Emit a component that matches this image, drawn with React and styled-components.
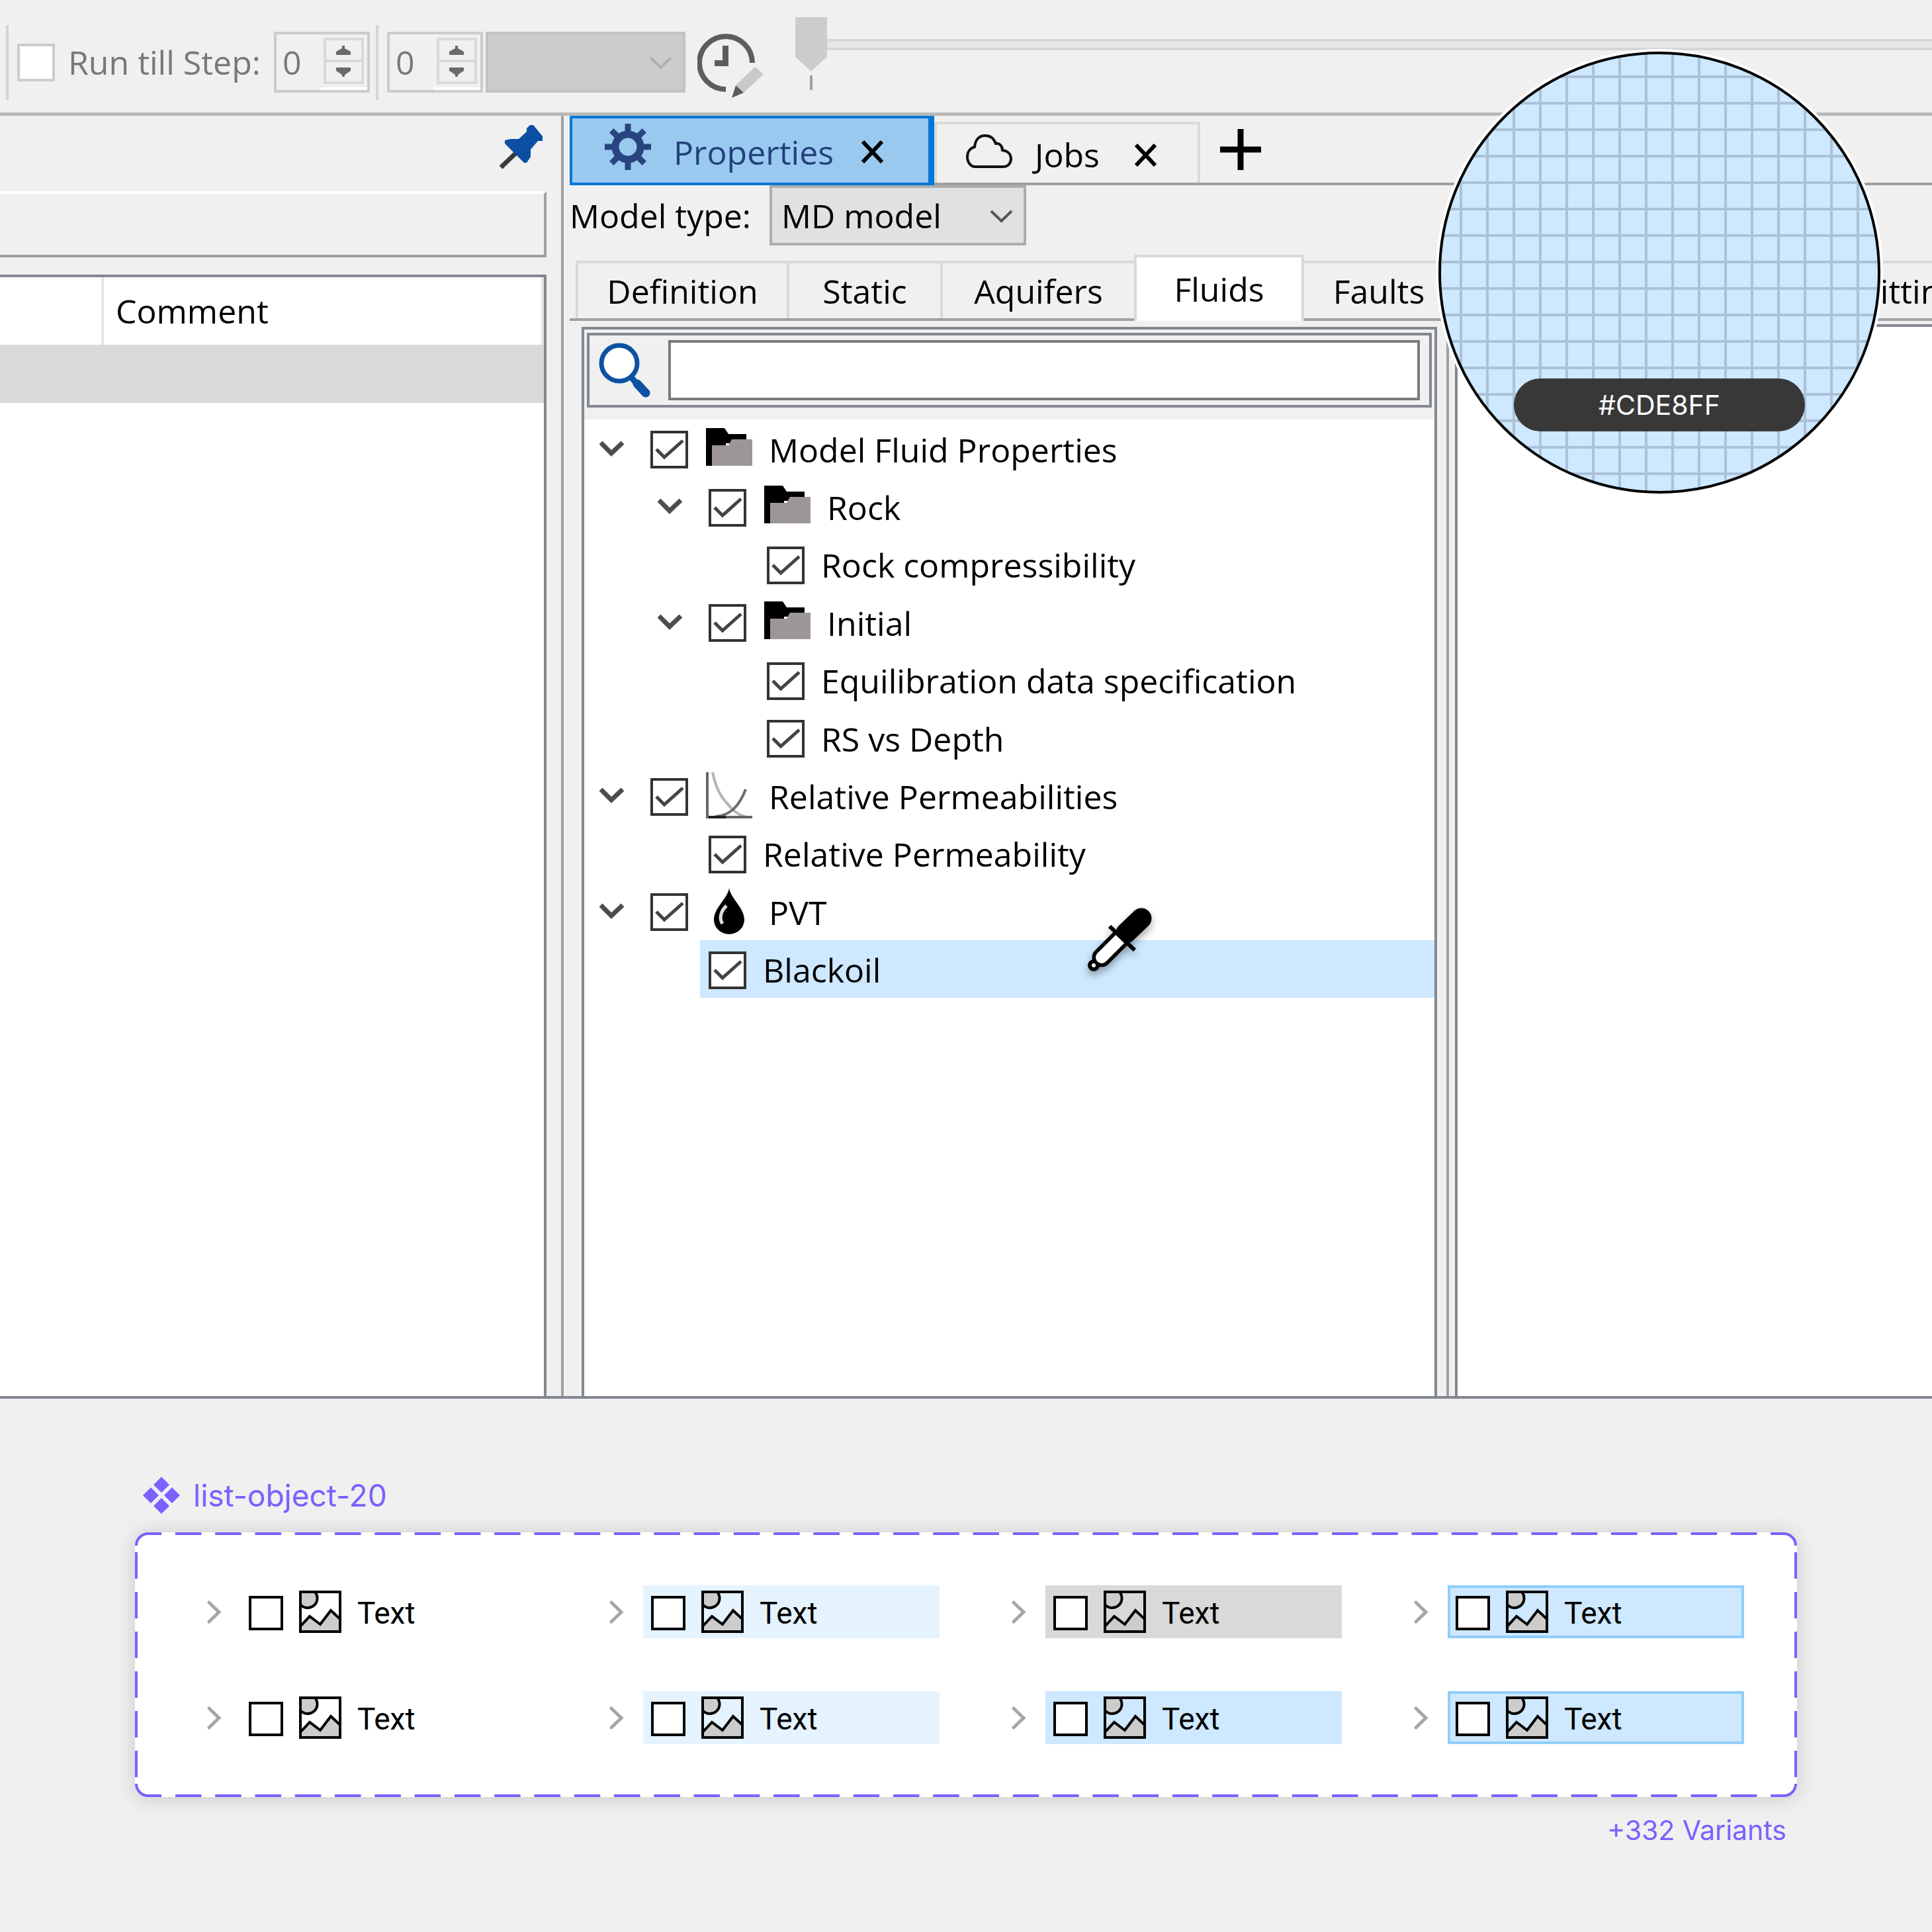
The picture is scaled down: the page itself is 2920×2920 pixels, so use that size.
import React, { useState } from "react";
import styled, { createGlobalStyle, css } from "styled-components";

const GlobalStyle = createGlobalStyle`
  *, *::before, *::after {
    box-sizing: border-box;
  }

  body {
    margin: 0;
    background: #f0f0f0;
    color: #000;
    font-family: "Open Sans", "Noto Sans", sans-serif;
    font-size: 50px;
    line-height: 68px;
  }

  button, input, select {
    margin: 0;
    padding: 0;
    border: none;
    border-radius: 0;
    background: none;
    color: inherit;
    font: inherit;
  }

  svg {
    display: block;
    flex: none;
  }
`;

const Page = styled.div`
  position: relative;
  display: flex;
  flex-direction: column;
  min-height: 100vh;
  overflow: hidden;
`;

/* ---------- toolbar ---------- */

const Toolbar = styled.header`
  display: flex;
  align-items: center;
  height: 175px;
  padding: 18px 0 0 9px;
  border-bottom: 5px solid #b8b8b8;
  color: #787878;
`;

const Separator = styled.span`
  flex: none;
  width: 4px;
  height: 113px;
  margin-right: 13px;
  background: #d4d4d4;
`;

const StepLabel = styled.label`
  display: flex;
  align-items: center;
  gap: 20px;
  margin-right: 20px;
  white-space: nowrap;
`;

const Spin = styled.div`
  display: flex;
  flex: none;
  width: 145px;
  height: 92px;
  margin-right: ${(props) => (props.$last ? "4px" : "9px")};
  border: 4px solid #ccc;
`;

const SpinInput = styled.input`
  flex: 1;
  min-width: 0;
  padding-left: 9px;
  appearance: textfield;

  &::-webkit-inner-spin-button {
    display: none;
  }
`;

const Steps = styled.div`
  display: flex;
  flex-direction: column;
  width: 71px;
  padding: 5px;
  border-bottom: 4px solid #fff;
`;

const StepButton = styled.button`
  display: flex;
  flex: 1;
  align-items: center;
  justify-content: center;
  border: 4px solid #d9d9d9;

  & + & {
    border-top: none;
  }
`;

const SelectWrap = styled.div`
  position: relative;
  flex: none;
  width: ${(props) => props.$width}px;
  height: ${(props) => props.$height}px;
  color: ${(props) => (props.$disabled ? "#b0b0b0" : "#555")};

  svg {
    position: absolute;
    right: 20px;
    top: 36px;
    pointer-events: none;
  }
`;

const SelectBox = styled.select`
  width: 100%;
  height: 100%;
  padding-left: 14px;
  border: 4px solid #adadad;
  background: #e1e1e1;
  color: #000;
  appearance: none;
  opacity: 1;

  &:disabled {
    border-color: #c2c2c2;
    background: #ccc;
  }
`;

const IconButton = styled.button`
  display: flex;
  flex: none;
  cursor: pointer;
`;

const TimeButton = styled(IconButton)`
  margin: 10px 48px 0 18px;
`;

const SliderArea = styled.div`
  flex: 1;
  min-width: 0;
  align-self: flex-start;
  padding-top: 8px;
`;

const Slider = styled.input`
  display: block;
  width: 100%;
  height: 82px;
  appearance: none;

  &::-webkit-slider-runnable-track {
    height: 17px;
    border: 4px solid #d6d6d6;
    border-right: none;
    background: #e7e9e8;
  }

  &::-webkit-slider-thumb {
    width: 48px;
    height: 82px;
    margin: -37px 0 0 -4px;
    background: #ccc;
    clip-path: polygon(0 0, 100% 0, 100% 74%, 50% 100%, 0 74%);
    appearance: none;
  }
`;

const SliderTick = styled.div`
  width: 4px;
  height: 22px;
  margin: 6px 0 0 22px;
  background: #a0a0a0;
`;

/* ---------- check boxes ---------- */

const CheckWrap = styled.span`
  display: grid;
  flex: none;

  & > * {
    grid-area: 1 / 1;
  }

  svg {
    pointer-events: none;
  }
`;

const CheckInput = styled.input`
  width: ${(props) => props.$size}px;
  height: ${(props) => props.$size}px;
  border: 4px solid ${(props) => props.$color};
  background: #fff;
  appearance: none;
`;

/* ---------- workspace ---------- */

const Workspace = styled.main`
  display: grid;
  flex: 1;
  grid-template-columns: 852px minmax(0, 1fr);
  border-bottom: 4px solid #828790;
`;

const Sidebar = styled.aside`
  display: flex;
  flex-direction: column;
  padding-right: 22px;
  border-right: 4px solid #a0a0a0;
`;

const SidebarHead = styled.div`
  display: flex;
  justify-content: flex-end;
  height: 114px;
  padding: 14px 5px 0 0;
`;

const SidebarBox = styled.div`
  height: 100px;
  margin-bottom: 26px;
  border: 4px solid #a0a0a0;
  border-top-color: #fff;
  border-left: none;
`;

const TableFrame = styled.div`
  flex: 1;
  border-top: 4px solid #828790;
  border-right: 4px solid #828790;
  background: #fff;
`;

const Table = styled.table`
  width: 100%;
  border-collapse: separate;
  border-spacing: 0;

  th {
    height: 102px;
    padding: 0 0 0 18px;
    border-right: 4px solid #e5e5e5;
    font-weight: 400;
    text-align: left;
  }

  th:first-child {
    width: 157px;
  }

  td {
    height: 88px;
    padding: 0;
    background: #d9d9d9;
  }
`;

const Content = styled.section`
  display: flex;
  flex-direction: column;
  min-width: 0;
  padding-left: 9px;
`;

const PageTabs = styled.nav`
  display: flex;
  align-items: flex-end;
  height: 105px;
  border-bottom: 4px solid #a0a0a0;
`;

const PageTab = styled.div`
  display: flex;
  align-items: center;
  width: ${(props) => props.$width}px;
  height: 92px;
  padding: 4px 0 0 44px;
  border: 4px solid #d9d9d9;
  border-bottom: none;

  ${(props) =>
    props.$active &&
    css`
      height: 105px;
      margin-bottom: -4px;
      padding-left: 48px;
      border: 4px solid #0078d7;
      border-right-width: 9px;
      background: #99c9ef;
      color: #24407c;
    `}
`;

const TabName = styled.button`
  display: flex;
  flex: 1;
  align-items: center;
  gap: 34px;
  cursor: pointer;
`;

const CloseButton = styled(IconButton)`
  margin-right: ${(props) => (props.$wide ? "66px" : "60px")};
  color: #000;
`;

const AddButton = styled(IconButton)`
  align-self: center;
  margin-left: 30px;
`;

const ModelRow = styled.div`
  display: flex;
  align-items: center;
  gap: 28px;
  height: 91px;
  margin-bottom: 14px;
`;

const Columns = styled.div`
  display: grid;
  flex: 1;
  grid-template-columns: 1329px minmax(0, 1fr);
`;

const Column = styled.div`
  display: flex;
  flex-direction: column;
  min-width: 0;
`;

const SubTabs = styled.div`
  display: flex;
  align-items: flex-end;
  height: 100px;
  padding-left: ${(props) => (props.$flush ? "0" : "9px")};
  border-bottom: 4px solid #a0a0a0;
`;

const SubTab = styled.button`
  flex: 0 0 ${(props) => (props.$width ? `${props.$width}px` : "auto")};
  height: 87px;
  border-top: 4px solid #d9d9d9;
  border-left: 4px solid #d9d9d9;
  white-space: nowrap;

  ${(props) =>
    props.$active &&
    css`
      height: 100px;
      margin-bottom: -4px;
      border-right: 4px solid #d9d9d9;
      background: #fff;
    `}

  ${(props) =>
    props.$after &&
    css`
      border-left: none;
    `}
`;

// Last tab of the strip, it runs on past the edge of the window.
const FittingTab = styled(SubTab)`
  padding: 0 48px 0 626px;
  border-left: none;
`;

const TreePane = styled.div`
  display: flex;
  flex: 1;
  flex-direction: column;
  padding: 9px 14px 0 18px;
  border-right: 4px solid #a0a0a0;
`;

const TreeFrame = styled.div`
  flex: 1;
  border: 4px solid #828790;
  border-bottom: none;
  background: #fff;
`;

const SearchBar = styled.div`
  padding: 5px 4px 18px;
  background: #f0f0f0;
`;

const SearchFrame = styled.label`
  display: flex;
  align-items: center;
  gap: 27px;
  height: 113px;
  padding: 0 14px;
  border: 4px solid #828790;
`;

const SearchInput = styled.input`
  flex: 1;
  min-width: 0;
  height: 91px;
  padding: 0 14px;
  border: 4px solid #7a7a7a;
  background: #fff;
`;

const Tree = styled.ul`
  display: grid;
  grid-auto-rows: 1fr;
  height: 874px;
  margin: 0;
  padding: 0;
  list-style: none;
`;

const TreeRow = styled.li`
  display: flex;
  padding-left: ${(props) => 22 + props.$level * 88}px;
`;

const ToggleSlot = styled.span`
  display: flex;
  flex: none;
  align-items: center;
  width: 65px;
`;

const TreeLabel = styled.label`
  display: flex;
  flex: 1;
  align-items: center;
  gap: 25px;
  padding: 4px 0 0 13px;
  background: ${(props) => (props.$selected ? "#cde8ff" : "transparent")};
  white-space: nowrap;
`;

const TreeIcon = styled.svg`
  margin-left: 2px;
`;

const ViewerPane = styled.div`
  flex: 1;
  margin: 5px 0 0 9px;
  border-top: 4px solid #828790;
  border-left: 4px solid #828790;
  background: #fff;
`;

/* ---------- colour loupe ---------- */

const Loupe = styled.div`
  position: absolute;
  top: 78px;
  right: 78px;
  display: flex;
  align-items: flex-end;
  justify-content: center;
  width: 668px;
  height: 668px;
  padding-bottom: 90px;
  border: 4px solid #000;
  border-radius: 50%;
  background-color: #cde8ff;
  background-image: linear-gradient(90deg, #abc2d6 4px, transparent 4px),
    linear-gradient(#abc2d6 4px, transparent 4px);
  background-position: 28px 32px;
  background-size: 40px 40px;
  box-shadow: 0 0 0 4px #fff;
`;

const HexPill = styled.output`
  width: 440px;
  border-radius: 40px;
  background: #383838;
  color: #fff;
  font: 41px/80px Inter, sans-serif;
  text-align: center;
`;

const Eyedropper = styled.svg`
  position: absolute;
  top: 1368px;
  left: 1640px;
  overflow: visible;
  filter: drop-shadow(0 6px 6px rgba(0, 0, 0, 0.35));
`;

/* ---------- component set ---------- */

const Library = styled.footer`
  padding: 118px 204px 130px;
  color: #7b61ff;
  font-family: Inter, sans-serif;
`;

const SetTitle = styled.h2`
  display: flex;
  align-items: center;
  gap: 20px;
  height: 56px;
  margin: 0 0 28px;
  padding-left: 12px;
  font-size: 46px;
  font-weight: 400;
`;

// The border is solid; the two pseudo elements paint the gaps over it so the
// corners stay closed whatever the frame's size is.
const SetFrame = styled.div`
  position: relative;
  display: grid;
  grid-template-columns: repeat(4, minmax(0, 1fr));
  gap: 80px;
  padding: 76px;
  border: 4px solid #7b61ff;
  border-radius: 20px;
  background: #fff;
  box-shadow: 0 2px 32px rgba(0, 0, 0, 0.17);

  &::before,
  &::after {
    content: "";
    position: absolute;
    pointer-events: none;
  }

  &::before {
    inset: -4px 16px;
    background-image: linear-gradient(90deg, transparent 33%, #fff 33% 67%, transparent 67%),
      linear-gradient(90deg, transparent 33%, #fff 33% 67%, transparent 67%);
    background-position: top, bottom;
    background-repeat: round no-repeat;
    background-size: 60px 4px;
  }

  &::after {
    inset: 16px -4px;
    background-image: linear-gradient(transparent 33%, #fff 33% 67%, transparent 67%),
      linear-gradient(transparent 33%, #fff 33% 67%, transparent 67%);
    background-position: left, right;
    background-repeat: no-repeat round;
    background-size: 4px 60px;
  }
`;

const Variant = styled.div`
  display: flex;
  height: 80px;
`;

const VariantToggle = styled(IconButton)`
  align-items: center;
  justify-content: center;
  width: 80px;
`;

const fills = {
  none: "transparent",
  hover: "#e5f3ff",
  muted: "#d9d9d9",
  selected: "#cde8ff",
  focused: "#cde8ff",
};

const VariantBody = styled.label`
  display: flex;
  flex: 1;
  align-items: center;
  gap: 24px;
  padding: 4px 0 0 12px;
  background: ${(props) => fills[props.$state]};
  box-shadow: ${(props) => (props.$state === "focused" ? "inset 0 0 0 4px #91cefa" : "none")};
  color: #000;
  font: 46px/64px Roboto, sans-serif;
`;

const SetCount = styled.p`
  margin: 26px 16px 0 0;
  font-size: 41px;
  line-height: 48px;
  text-align: right;
`;

/* ---------- drawings ---------- */

const Chevron = () => (
  <svg width="35" height="22" viewBox="0 0 35 22" fill="none" stroke="currentColor" strokeWidth="4">
    <path d="M2 3 17.5 18 33 3" />
  </svg>
);

const StepArrow = ({ down }) => (
  <svg width="22" height="14" viewBox="0 0 22 14" fill="#6a6a6a">
    <path d={down ? "M0 0H22V5L13 11V14H9V11L0 5Z" : "M0 14H22V9L13 4V0H9V4L0 9Z"} />
  </svg>
);

const TimeIcon = () => (
  <svg width="100" height="97" viewBox="0 0 100 97">
    <path d="M43 84A40 40 0 1 1 83 44" fill="none" stroke="#5c5e5d" strokeWidth="8" />
    <path d="M38 18H47V49H26V40H38Z" fill="#5c5e5d" />
    <path d="M87 50 100 61 70 89 58 78Z" fill="#c8c9cb" />
    <path d="M58 78 70 89 52 97Z" fill="#5c5e5d" />
  </svg>
);

const PinIcon = () => (
  <svg width="67" height="66" viewBox="0 0 67 66">
    <path d="M25 43 3 64" stroke="#3a3a3a" strokeWidth="7" />
    <path
      d="M47 0H52L66 17V24H59L48 37V48L42 57H38L9 28V23L18 21H30L42 10V5Z"
      fill="#0a4fa3"
    />
  </svg>
);

const GearIcon = () => (
  <svg width="71" height="87" viewBox="-36 -36 71 87" stroke="#28457f" fill="none">
    <circle r="19" strokeWidth="11" />
    {[0, 45, 90, 135, 180, 225, 270, 315].map((angle) => (
      <path key={angle} d="M0 -21V-35" strokeWidth="9" transform={`rotate(${angle})`} />
    ))}
  </svg>
);

const CloudIcon = () => (
  <svg width="70" height="64" viewBox="0 0 70 64" fill="none" stroke="#111" strokeWidth="4">
    <path d="M14 50H56C64 50 68 44 68 38C68 30 62 26 55 25C55 18 50 14 45 15C42 7 37 3 29 3C19 3 14 10 13 20C6 22 2 28 2 35C2 43 7 50 14 50Z" />
  </svg>
);

const CloseIcon = () => (
  <svg width="37" height="37" viewBox="0 0 37 37" stroke="currentColor" strokeWidth="6">
    <path d="M4 3 33 34M33 3 4 34" />
  </svg>
);

const PlusIcon = () => (
  <svg width="62" height="62" viewBox="0 0 62 62" stroke="#000" strokeWidth="9">
    <path d="M31 0V62M0 31H62" />
  </svg>
);

const SearchIcon = () => (
  <svg width="78" height="84" viewBox="0 0 78 84" stroke="#0b52a3">
    <path d="M48 51 60 65" strokeWidth="9" />
    <path d="M58 62 71 76" strokeWidth="13" strokeLinecap="round" />
    <circle cx="31" cy="31" r="27" fill="#fff" strokeWidth="7" />
  </svg>
);

const ToggleIcon = () => (
  <svg width="39" height="26" viewBox="0 0 39 26" fill="none" stroke="#4d4d4d" strokeWidth="7">
    <path d="M3 4 19 20 36 4" />
  </svg>
);

const FolderIcon = () => (
  <TreeIcon width="70" height="74" viewBox="0 -3 70 74">
    <path d="M0 1H28L34 10H61V24H30V40H9V58H0Z" />
    <path d="M9 27H34L39 18H70V58H9Z" fill="#9d9696" />
  </TreeIcon>
);

const CurvesIcon = () => (
  <TreeIcon width="70" height="74" viewBox="0 0 70 74" fill="none" strokeWidth="4">
    <path d="M10 0C14 20 20 34 30 45C40 57 46 64 62 68" stroke="#b4b4b4" />
    <path d="M14 67C36 66 50 52 60 26" stroke="#6c6c6c" />
    <path d="M2 0V68H70" stroke="#666" />
    <path d="M4 68H30" stroke="#222" />
  </TreeIcon>
);

const DropIcon = () => (
  <TreeIcon width="70" height="74" viewBox="0 0 70 74">
    <path d="M35 0C37 16 58 30 58 48A23 22 0 0 1 12 48C12 30 33 16 35 0Z" />
    <path d="M31 27C23 34 19 46 25 54" fill="none" stroke="#ddd" strokeWidth="5" />
  </TreeIcon>
);

const ComponentIcon = () => (
  <svg width="56" height="56" viewBox="0 0 56 56" fill="currentColor">
    <path d="M28 0 40 12 28 24 16 12ZM44 16 56 28 44 40 32 28ZM28 32 40 44 28 56 16 44ZM12 16 24 28 12 40 0 28Z" />
  </svg>
);

const ChevronRight = () => (
  <svg width="22" height="35" viewBox="0 0 22 35" fill="none" stroke="#a6a6a6" strokeWidth="5">
    <path d="M3 3 18 17.5 3 32" strokeLinecap="round" />
  </svg>
);

const PictureIcon = () => (
  <svg width="64" height="68" viewBox="0 0 64 68" fill="#ccc" stroke="#000" strokeWidth="4">
    <path d="M24 2A14 14 0 0 1 2 21V2Z" />
    <path d="M2 54 16 39 32 51 48 30 62 43V62H2Z" />
    <path d="M2 2H62V62H2Z" fill="none" />
  </svg>
);

const EyedropperIcon = () => (
  <Eyedropper width="104" height="104" viewBox="0 0 104 104" aria-hidden="true">
    <g strokeLinecap="round">
      <path d="M25 79 52 52" stroke="#000" strokeWidth="29" />
      <path d="M62 42 85 20" stroke="#000" strokeWidth="31" />
      <circle cx="13" cy="91" r="9" />
    </g>
    <path d="M25 79V79" stroke="#fff" strokeWidth="18" strokeLinecap="round" />
    <path d="M25 79 53 51" stroke="#fff" strokeWidth="18" />
    <circle cx="13" cy="91" r="3" fill="#fff" />
    <path d="M37 32 75 68" stroke="#000" strokeWidth="6" />
  </Eyedropper>
);

/* ---------- data ---------- */

const icons = { folder: FolderIcon, curves: CurvesIcon, drop: DropIcon };

const treeItems = [
  { name: "Model Fluid Properties", level: 0, icon: "folder" },
  { name: "Rock", level: 1, icon: "folder" },
  { name: "Rock compressibility", level: 2 },
  { name: "Initial", level: 1, icon: "folder" },
  { name: "Equilibration data specification", level: 2 },
  { name: "RS vs Depth", level: 2 },
  { name: "Relative Permeabilities", level: 0, icon: "curves" },
  { name: "Relative Permeability", level: 1 },
  { name: "PVT", level: 0, icon: "drop" },
  { name: "Blackoil", level: 1, selected: true },
];

const subTabs = [
  { name: "Definition", width: 319 },
  { name: "Static", width: 232 },
  { name: "Aquifers", width: 293 },
  { name: "Fluids", width: 257 },
  { name: "Faults", width: 226, after: true },
];

const variants = ["none", "hover", "muted", "focused", "none", "hover", "selected", "focused"];

const CheckBox = ({ size = 57, color = "#333", checked, onChange, disabled }) => (
  <CheckWrap>
    <CheckInput
      type="checkbox"
      $size={size}
      $color={color}
      checked={checked}
      onChange={onChange}
      disabled={disabled}
    />
    {checked && (
      <svg width={size} height={size} viewBox="0 0 57 57" fill="none" stroke="#444" strokeWidth="5">
        <path d="M9 28 21 40 49 15" />
      </svg>
    )}
  </CheckWrap>
);

const Spinner = ({ label, last }) => (
  <Spin $last={last}>
    <SpinInput type="number" aria-label={label} value={0} readOnly disabled />
    <Steps>
      <StepButton aria-label="Increase" disabled>
        <StepArrow />
      </StepButton>
      <StepButton aria-label="Decrease" disabled>
        <StepArrow down />
      </StepButton>
    </Steps>
  </Spin>
);

const TreeItem = ({ item }) => {
  const [checked, setChecked] = useState(true);
  const Icon = icons[item.icon];

  return (
    <TreeRow $level={item.level}>
      <ToggleSlot>
        {Icon && (
          <IconButton aria-label={`Collapse ${item.name}`}>
            <ToggleIcon />
          </IconButton>
        )}
      </ToggleSlot>
      <TreeLabel $selected={item.selected}>
        <CheckBox checked={checked} onChange={() => setChecked(!checked)} />
        {Icon && <Icon />}
        {item.name}
      </TreeLabel>
    </TreeRow>
  );
};

const VariantItem = ({ state }) => {
  const [checked, setChecked] = useState(false);

  return (
    <Variant>
      <VariantToggle aria-label="Expand">
        <ChevronRight />
      </VariantToggle>
      <VariantBody $state={state}>
        <CheckBox size={52} color="#000" checked={checked} onChange={() => setChecked(!checked)} />
        <PictureIcon />
        Text
      </VariantBody>
    </Variant>
  );
};

const App = () => {
  const [activeTab, setActiveTab] = useState("Fluids");
  const [query, setQuery] = useState("");

  return (
    <>
      <GlobalStyle />
      <Page>
        <Toolbar>
          <Separator />
          <StepLabel>
            <CheckBox color="#ccc" checked={false} disabled />
            Run till Step:
          </StepLabel>
          <Spinner label="Run till step" />
          <Separator />
          <Spinner label="Current step" last />
          <SelectWrap $width={302} $height={92} $disabled>
            <SelectBox aria-label="Date" disabled />
            <Chevron />
          </SelectWrap>
          <TimeButton aria-label="Edit time">
            <TimeIcon />
          </TimeButton>
          <SliderArea>
            <Slider type="range" aria-label="Time step" min="0" max="100" defaultValue="0" disabled />
            <SliderTick />
          </SliderArea>
        </Toolbar>

        <Workspace>
          <Sidebar>
            <SidebarHead>
              <IconButton aria-label="Pin panel">
                <PinIcon />
              </IconButton>
            </SidebarHead>
            <SidebarBox />
            <TableFrame>
              <Table>
                <thead>
                  <tr>
                    <th aria-label="Name" />
                    <th>Comment</th>
                  </tr>
                </thead>
                <tbody>
                  <tr>
                    <td />
                    <td />
                  </tr>
                </tbody>
              </Table>
            </TableFrame>
          </Sidebar>

          <Content>
            <PageTabs>
              <PageTab $width={551} $active>
                <TabName>
                  <GearIcon />
                  Properties
                </TabName>
                <CloseButton aria-label="Close Properties" $wide>
                  <CloseIcon />
                </CloseButton>
              </PageTab>
              <PageTab $width={402}>
                <TabName>
                  <CloudIcon />
                  Jobs
                </TabName>
                <CloseButton aria-label="Close Jobs">
                  <CloseIcon />
                </CloseButton>
              </PageTab>
              <AddButton aria-label="Add tab">
                <PlusIcon />
              </AddButton>
            </PageTabs>

            <ModelRow>
              <label htmlFor="model-type">Model type:</label>
              <SelectWrap $width={388} $height={91}>
                <SelectBox id="model-type" defaultValue="md">
                  <option value="md">MD model</option>
                </SelectBox>
                <Chevron />
              </SelectWrap>
            </ModelRow>

            <Columns>
              <Column>
                <SubTabs>
                  {subTabs.map((tab) => (
                    <SubTab
                      key={tab.name}
                      $width={tab.width}
                      $after={tab.after}
                      $active={tab.name === activeTab}
                      onClick={() => setActiveTab(tab.name)}
                    >
                      {tab.name}
                    </SubTab>
                  ))}
                </SubTabs>
                <TreePane>
                  <TreeFrame>
                    <SearchBar>
                      <SearchFrame>
                        <SearchIcon />
                        <SearchInput
                          type="text"
                          aria-label="Search properties"
                          value={query}
                          onChange={(e) => setQuery(e.target.value)}
                        />
                      </SearchFrame>
                    </SearchBar>
                    <Tree>
                      {treeItems.map((item) => (
                        <TreeItem key={item.name} item={item} />
                      ))}
                    </Tree>
                  </TreeFrame>
                </TreePane>
              </Column>
              <Column>
                <SubTabs $flush>
                  <FittingTab>Fitting</FittingTab>
                </SubTabs>
                <ViewerPane />
              </Column>
            </Columns>
          </Content>
        </Workspace>

        <Library>
          <SetTitle>
            <ComponentIcon />
            list-object-20
          </SetTitle>
          <SetFrame>
            {variants.map((state, index) => (
              <VariantItem key={index} state={state} />
            ))}
          </SetFrame>
          <SetCount>+332 Variants</SetCount>
        </Library>

        <EyedropperIcon />
        <Loupe>
          <HexPill>#CDE8FF</HexPill>
        </Loupe>
      </Page>
    </>
  );
};

export default App;
